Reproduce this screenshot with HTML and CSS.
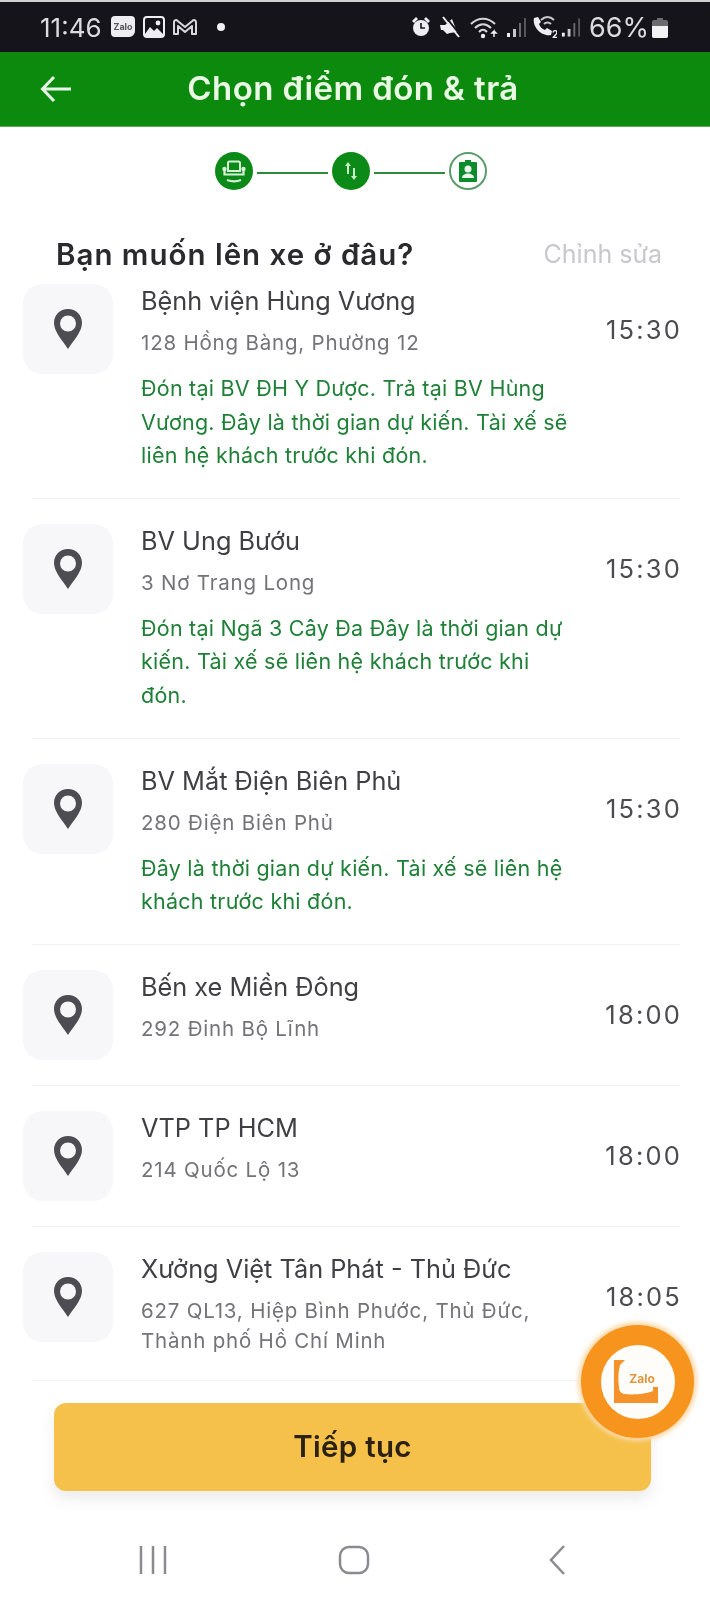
FILE: index.html
```html
<!DOCTYPE html>
<html lang="vi">
<head>
<meta charset="utf-8">
<title>Chọn điểm đón &amp; trả</title>
<link rel="stylesheet" href="styles.css">
</head>
<body>
<div class="screen">
  <div class="status">
    <span class="clock">11:46</span>
    <svg class="ic-zalo" width="26" height="24" viewBox="0 0 26 24"><path d="M5 1h16a4 4 0 0 1 4 4v11a6 6 0 0 1-6 6H5a4 4 0 0 1-4-4V5a4 4 0 0 1 4-4z" fill="#eeeef2"/><text x="13" y="14.5" text-anchor="middle" class="zalo-mini">Zalo</text></svg>
    <svg class="ic-img" width="22" height="22" viewBox="0 0 22 22"><rect x="1" y="1" width="20" height="20" rx="3" fill="none" stroke="#eeeef2" stroke-width="2"/><path d="M2 18l5-7 4 4 3-3 6 6v2H2z" fill="#eeeef2"/><circle cx="15" cy="7" r="2.4" fill="#eeeef2"/></svg>
    <svg class="ic-m" width="26" height="20" viewBox="0 0 26 20"><path d="M2 17V5a2 2 0 0 1 3.400-1.300L13 10l7.600-6.300A2 2 0 0 1 24 5v12h-4V9l-7 6-7-6v8z" fill="none" stroke="#d8d8dc" stroke-width="2" stroke-linejoin="round"/></svg>
    <span class="dot"></span>
    <span class="status-gap"></span>
    <svg width="20" height="22" viewBox="0 0 20 22"><path d="M1 5l4-4 2 2-4 4zM19 5l-4-4-2 2 4 4z" fill="#eeeef2"/><circle cx="10" cy="12" r="8" fill="#eeeef2"/><path d="M10 7v5h4" fill="none" stroke="#14141a" stroke-width="1.600"/></svg>
    <svg class="ic-mute" width="23" height="24" viewBox="0 0 23 24"><path d="M1 10h5l7-6 5 13-7 1-3 1-4-4H2z" fill="#eeeef2"/><path d="M6 1l16 20" stroke="#14141a" stroke-width="2"/><path d="M4 2l16 20" stroke="#eeeef2" stroke-width="2"/></svg>
    <svg class="ic-wifi" width="30" height="24" viewBox="0 0 30 24"><path d="M1 9c7-7 17-7 24 0M5 13c5-5 11-5 16 0M9 17c3-3 5-3 8 0" fill="none" stroke="#d4d4d8" stroke-width="2.200"/><circle cx="13" cy="21" r="2.200" fill="#eeeef2"/><path d="M24 22v-6l-2 2h4l-2-2" fill="none" stroke="#eeeef2" stroke-width="1.500"/></svg>
    <svg class="ic-sig" width="22" height="24" viewBox="0 0 22 24"><path d="M2 18h3v4H2z" fill="#eeeef2"/><path d="M8 14h3v8H8z" fill="#c8c8cc"/><path d="M14 8h2v14h-2z" fill="#6a6a70"/><path d="M19 3h2v19h-2z" fill="#55555c"/></svg>
    <svg class="ic-call" width="26" height="24" viewBox="0 0 26 24"><path d="M3 3l4-1 3 5-2 2c1 3 3 5 6 6l2-2 5 3-1 4c-9 2-19-8-17-17z" fill="#eeeef2"/><path d="M10 5c4-4 9-4 13 0M13 9c2-2 5-2 7 0" fill="none" stroke="#c8c8cc" stroke-width="2"/><text x="21" y="23" class="sim">2</text></svg>
    <svg class="ic-sig2" width="21" height="24" viewBox="0 0 22 24"><path d="M2 18h3v4H2z" fill="#eeeef2"/><path d="M8 14h3v8H8z" fill="#c8c8cc"/><path d="M14 8h2v14h-2z" fill="#6a6a70"/><path d="M19 3h2v19h-2z" fill="#55555c"/></svg>
    <span class="pct">66%</span>
    <svg class="ic-bat" width="16" height="21" viewBox="0 0 16 21"><path d="M5 1h6v2h3a2 2 0 0 1 2 2v14a2 2 0 0 1-2 2H2a2 2 0 0 1-2-2V5a2 2 0 0 1 2-2h3z" fill="#6a6a70"/><path d="M0 9h16v10a2 2 0 0 1-2 2H2a2 2 0 0 1-2-2z" fill="#f2f2f4"/></svg>
  </div>

  <header class="topbar">
    <svg class="back" width="32" height="28" viewBox="0 0 32 28"><path d="M31 14H3M14 2L2.500 14 14 26" fill="none" stroke="#e8f8e8" stroke-width="3"/></svg>
    <h1 class="title">Chọn điểm đón &amp; trả</h1>
    <span></span>
  </header>

  <div class="stepper">
    <span class="step done"><svg width="26" height="26" viewBox="0 0 26 26"><path d="M8.500 3.500h9a1.500 1.500 0 0 1 1.500 1.500v8H7V5a1.500 1.500 0 0 1 1.500-1.500z" fill="none" stroke="#d6f2d6" stroke-width="2"/><circle cx="3.500" cy="11" r="2.200" fill="#d6f2d6"/><circle cx="22.500" cy="11" r="2.200" fill="#d6f2d6"/><path d="M3.500 12v4.500h19V12" fill="none" stroke="#d6f2d6" stroke-width="2.200"/><path d="M6 22c4 1.500 10 1.500 14 0" fill="none" stroke="#d6f2d6" stroke-width="2.200"/></svg></span>
    <span class="line"></span>
    <span class="step done"><svg width="24" height="24" viewBox="0 0 24 24"><path d="M9 3l3 4h-2v8H8V7H6zM15 21l-3-4h2V9h2v8h2z" fill="#c9eec9"/></svg></span>
    <span class="line"></span>
    <span class="step todo"><svg width="22" height="24" viewBox="0 0 22 24"><path d="M3 3h5V1h6v2h5a1 1 0 0 1 1 1v18a1 1 0 0 1-1 1H3a1 1 0 0 1-1-1V4a1 1 0 0 1 1-1z" fill="#0d8a2a"/><circle cx="11" cy="10" r="3.500" fill="#eaf6ea"/><path d="M5 19c0-6 12-6 12 0z" fill="#eaf6ea"/></svg></span>
  </div>

  <div class="ask">
    <h2 class="ask-title">Bạn muốn lên xe ở đâu?</h2>
    <span class="edit">Chỉnh sửa</span>
  </div>

  <div class="list">
    <div class="item first">
      <div class="pin-box"><svg width="30" height="42" viewBox="0 0 30 42"><path fill-rule="evenodd" d="M15 1C7 1 1 7 1 15c0 9 9 18 14 26 5-8 14-17 14-26C29 7 23 1 15 1zm0 6.500a8 8 0 1 1 0 16 8 8 0 0 1 0-16z" fill="#4c4c52"/></svg></div>
      <div class="info">
        <div class="name">Bệnh viện Hùng Vương</div>
        <div class="addr">128 Hồng Bàng, Phường 12</div>
        <div class="note">Đón tại BV ĐH Y Dược. Trả tại BV Hùng<br>Vương. Đây là thời gian dự kiến. Tài xế sẽ<br>liên hệ khách trước khi đón.</div>
      </div>
      <div class="time">15:30</div>
    </div>
    <div class="sep"></div>
    <div class="item">
      <div class="pin-box"><svg width="30" height="42" viewBox="0 0 30 42"><path fill-rule="evenodd" d="M15 1C7 1 1 7 1 15c0 9 9 18 14 26 5-8 14-17 14-26C29 7 23 1 15 1zm0 6.500a8 8 0 1 1 0 16 8 8 0 0 1 0-16z" fill="#4c4c52"/></svg></div>
      <div class="info">
        <div class="name">BV Ung Bướu</div>
        <div class="addr">3 Nơ Trang Long</div>
        <div class="note">Đón tại Ngã 3 Cây Đa Đây là thời gian dự<br>kiến. Tài xế sẽ liên hệ khách trước khi<br>đón.</div>
      </div>
      <div class="time">15:30</div>
    </div>
    <div class="sep"></div>
    <div class="item">
      <div class="pin-box"><svg width="30" height="42" viewBox="0 0 30 42"><path fill-rule="evenodd" d="M15 1C7 1 1 7 1 15c0 9 9 18 14 26 5-8 14-17 14-26C29 7 23 1 15 1zm0 6.500a8 8 0 1 1 0 16 8 8 0 0 1 0-16z" fill="#4c4c52"/></svg></div>
      <div class="info">
        <div class="name">BV Mắt Điện Biên Phủ</div>
        <div class="addr">280 Điện Biên Phủ</div>
        <div class="note">Đây là thời gian dự kiến. Tài xế sẽ liên hệ<br>khách trước khi đón.</div>
      </div>
      <div class="time">15:30</div>
    </div>
    <div class="sep"></div>
    <div class="item">
      <div class="pin-box"><svg width="30" height="42" viewBox="0 0 30 42"><path fill-rule="evenodd" d="M15 1C7 1 1 7 1 15c0 9 9 18 14 26 5-8 14-17 14-26C29 7 23 1 15 1zm0 6.500a8 8 0 1 1 0 16 8 8 0 0 1 0-16z" fill="#4c4c52"/></svg></div>
      <div class="info">
        <div class="name">Bến xe Miền Đông</div>
        <div class="addr">292 Đinh Bộ Lĩnh</div>
      </div>
      <div class="time">18:00</div>
    </div>
    <div class="sep"></div>
    <div class="item">
      <div class="pin-box"><svg width="30" height="42" viewBox="0 0 30 42"><path fill-rule="evenodd" d="M15 1C7 1 1 7 1 15c0 9 9 18 14 26 5-8 14-17 14-26C29 7 23 1 15 1zm0 6.500a8 8 0 1 1 0 16 8 8 0 0 1 0-16z" fill="#4c4c52"/></svg></div>
      <div class="info">
        <div class="name">VTP TP HCM</div>
        <div class="addr">214 Quốc Lộ 13</div>
      </div>
      <div class="time">18:00</div>
    </div>
    <div class="sep"></div>
    <div class="item last">
      <div class="pin-box"><svg width="30" height="42" viewBox="0 0 30 42"><path fill-rule="evenodd" d="M15 1C7 1 1 7 1 15c0 9 9 18 14 26 5-8 14-17 14-26C29 7 23 1 15 1zm0 6.500a8 8 0 1 1 0 16 8 8 0 0 1 0-16z" fill="#4c4c52"/></svg></div>
      <div class="info">
        <div class="name">Xưởng Việt Tân Phát - Thủ Đức</div>
        <div class="addr">627 QL13, Hiệp Bình Phước, Thủ Đức,<br>Thành phố Hồ Chí Minh</div>
      </div>
      <div class="time">18:05</div>
    </div>
    <div class="sep"></div>
  </div>

  <div class="cta-wrap">
    <button class="cta">Tiếp tục</button>
  </div>

  <div class="fab">
    <svg width="74" height="74" viewBox="0 0 74 74"><circle cx="37" cy="37" r="37" fill="#fffdf9"/><path d="M13 15h11l-5 5c-2 8-2 15-1 22 0 4 2 6 5 7 10 1 22 0 29-3v-4h5v16H13z" fill="#f5922a"/><text x="41" y="38" text-anchor="middle" class="fab-text">Zalo</text></svg>
  </div>

  <nav class="navbar">
    <svg width="30" height="30" viewBox="0 0 30 30"><path d="M3 1v28M15 1v28M27 1v28" stroke="#8a8a90" stroke-width="2.500"/></svg>
    <svg class="nav-home" width="32" height="30" viewBox="0 0 32 30"><rect x="2" y="2" width="28" height="26" rx="9" fill="none" stroke="#8a8a90" stroke-width="2.500"/></svg>
    <svg width="18" height="32" viewBox="0 0 18 32"><path d="M16 2L3 16l13 14" fill="none" stroke="#8a8a90" stroke-width="2.500"/></svg>
  </nav>
</div>
</body>
</html>
```

FILE: styles.css
```css
* { box-sizing: border-box; }
html, body { margin: 0; padding: 0; background: #fff; }
body { font-family: "Inter", "Noto Sans", sans-serif; }

.screen {
  position: relative;
  width: 710px;
  height: 1610px;
  overflow: hidden;
  background: #fff;
  filter: blur(0.6px);
}

.status {
  display: flex;
  align-items: center;
  height: 52px;
  border-top: 2px solid #d0d0d0;
  padding: 0 42px 0 40px;
  background: #14141a;
  color: #dcdce0;
}
.clock { font-size: 26px; width: 70px; }
.ic-img { margin-left: 7px; }
.ic-m { margin-left: 7px; }
.dot { width: 8px; height: 8px; margin-left: 19px; border-radius: 50%; background: #f2f2f4; }
.status-gap { flex: 1; }
.ic-mute { margin-left: 8px; }
.ic-wifi { margin-left: 8px; }
.ic-sig { margin-left: 5px; }
.ic-call { margin-left: 4px; }
.ic-sig2 { margin-left: 3px; }
.pct { font-size: 27px; margin-left: 8px; }
.ic-bat { margin-left: 3px; }
.zalo-mini { font-size: 9px; font-weight: 700; fill: #55555c; }
.sim { font-size: 10px; font-weight: 700; fill: #eeeef2; }

.topbar {
  display: grid;
  grid-template-columns: 1fr auto 1fr;
  align-items: center;
  height: 75px;
  padding: 0 44px 0 40px;
  background: #0b8a0e;
  border-bottom: 1px solid #57ad57;
}
.back { display: block; }
.title {
  margin: 0 0 2px;
  font-size: 33px;
  font-weight: 600;
  letter-spacing: 0.4px;
  color: #e9f9e4;
}

.stepper {
  display: flex;
  justify-content: center;
  align-items: center;
  gap: 4px;
  padding: 25px 8px 0 0;
}
.step {
  display: flex;
  align-items: center;
  justify-content: center;
  width: 38px;
  height: 38px;
  border-radius: 50%;
}
.done { background: #0b8a18; }
.todo { border: 2px solid #5c9c6c; }
.line { width: 71px; height: 2px; margin-top: 3px; background: #2c8a3c; }

.ask {
  display: flex;
  justify-content: space-between;
  align-items: center;
  height: 40px;
  margin-top: 44px;
  padding: 0 48px 0 56px;
}
.ask-title { margin: 0; font-size: 29.5px; font-weight: 600; letter-spacing: 1px; color: #2a2a2e; }
.edit { font-size: 25px; color: #c8c8cc; }

.item {
  display: flex;
  align-items: flex-start;
  padding: 25px 28px 25px 23px;
}
.item.first { padding-top: 10px; }
.item.last { padding-bottom: 24px; }
.pin-box {
  display: flex;
  flex: none;
  align-items: center;
  justify-content: center;
  width: 90px;
  height: 90px;
  border-radius: 20px;
  background: #f7f7f9;
}
.info { flex: 1; min-width: 0; margin-left: 28px; }
.name { font-size: 25.3px; line-height: 34px; color: #3f3f44; }
.addr { margin-top: 10px; font-size: 20.5px; line-height: 30px; color: #737378; letter-spacing: 0.8px; }
.note { margin-top: 14px; font-size: 21.5px; line-height: 33.6px; letter-spacing: 0.24px; color: #1f8038; }
.time {
  display: flex;
  flex: none;
  align-items: center;
  height: 90px;
  font-size: 25.5px;
  letter-spacing: 2.2px;
  color: #4c4c50;
}
.sep { height: 1px; margin: 0 30px 0 32px; background: #f1f1f2; }

.cta-wrap { padding: 22px 59px 0 54px; }
.cta {
  display: block;
  width: 100%;
  height: 88px;
  padding: 0 0 2px;
  border: none;
  border-radius: 12px;
  background: #f5c14a;
  box-shadow: 0 8px 14px rgba(120, 120, 120, 0.14);
  font-family: inherit;
  font-size: 29.5px;
  font-weight: 600;
  letter-spacing: 0.3px;
  color: #2a2112;
}

.fab {
  position: absolute;
  left: 581px;
  top: 1325px;
  display: flex;
  align-items: center;
  justify-content: center;
  width: 113px;
  height: 113px;
  border-radius: 50%;
  background: #f7941d;
  box-shadow: 0 0 4px 3px #fcd9a8;
}
.fab-text { font-size: 12px; font-weight: 700; fill: #e09640; }

.navbar {
  display: flex;
  justify-content: space-between;
  align-items: center;
  margin-top: 53px;
  padding: 0 144px 0 138px;
}
.navbar svg { display: block; }
.nav-home { margin-right: 8px; }
```
